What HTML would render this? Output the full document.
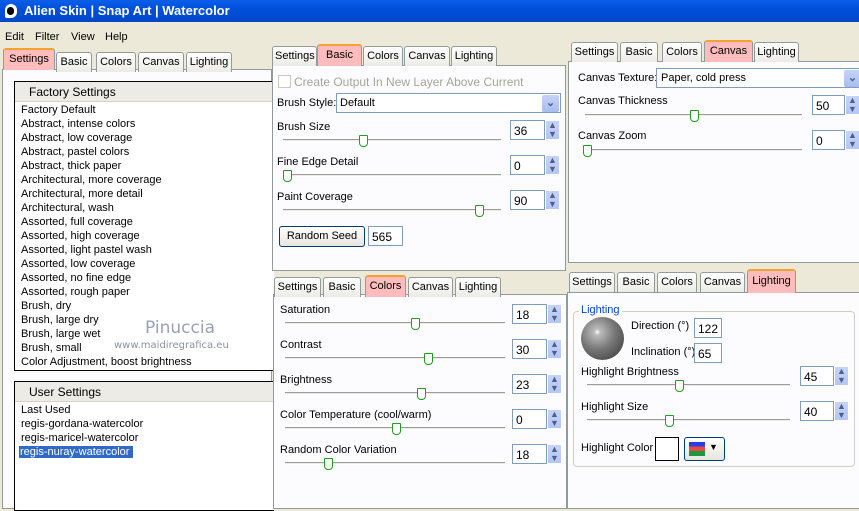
<!DOCTYPE html>
<html><head><meta charset="utf-8"><style>
*{margin:0;padding:0;box-sizing:border-box}
body{width:859px;height:492px;overflow:hidden;background:#ece9d8;font-family:"Liberation Sans",sans-serif;font-size:11px;color:#000;position:relative}
.a{position:absolute;white-space:nowrap}
.title{left:0;top:0;width:859px;height:22px;background:linear-gradient(#0a5fe8,#0050dc 40%,#0046c8);color:#fff;font-weight:bold;font-size:13px;padding:3px 0 0 24px}
.panel{background:#fcfcfe;border:1px solid #919b9c}
.tab{height:20px;border:1px solid #919b9c;border-bottom:none;border-radius:3px 3px 0 0;background:linear-gradient(#fff,#ecebe6);padding:3px 2px 0;font-size:11px;text-align:center;overflow:hidden}
.tab.sel{background:#ffbcbc;border-top:2px solid #f6a030}
.track{height:3px;border-top:1px solid #9d9c99;border-bottom:1px solid #fff;background:#ecebe5}
.thumb{width:9px;height:12px;background:#fff;border:1px solid #1ca01c;border-radius:1px 1px 4px 4px}
.spin{height:20px;border:1px solid #7f9db9;background:#fff;padding:3px 0 0 3px;font-size:12px}
.arr{width:15px;height:20px;background:linear-gradient(#c6d3f7,#b4c6f4);border:1px solid #fff;color:#4d6185;font-size:9px;line-height:9px;text-align:center}
.box{border:1px solid #7f9db9;background:#fff}
.drop{width:17px;height:17px;background:linear-gradient(#c6d3f7,#a8bdf0);border-radius:2px;color:#4d6185;text-align:center;font-size:11px;font-weight:bold;line-height:17px}
.hdr{background:#ecebe5;border-bottom:1px solid #d6d2c2;padding:3px 0 0 14px;font-size:12px;height:20px}
.lst div{height:14px;line-height:14px}
.lbl{font-size:11px}
</style></head><body>
<div class="a title">Alien Skin | Snap Art | Watercolor</div>
<div class="a" style="left:5px;top:4px;width:12px;height:14px;background:#fff;border-radius:6px 6px 6px 2px"></div>
<div class="a" style="left:7px;top:7px;width:7px;height:8px;background:#000;border-radius:4px"></div>
<div class="a" style="left:5px;top:31px">Edit</div><div class="a" style="left:35px;top:31px">Filter</div><div class="a" style="left:71px;top:31px">View</div><div class="a" style="left:105px;top:31px">Help</div>

<!-- left panel -->
<div class="a panel" style="left:2px;top:69px;width:270px;height:440px"></div>
<div class="a tab sel" style="left:3px;top:48px;width:52px;height:22px">Settings</div>
<div class="a tab" style="left:56px;top:52px;width:36px">Basic</div>
<div class="a tab" style="left:96px;top:52px;width:40px">Colors</div>
<div class="a tab" style="left:138px;top:52px;width:46px">Canvas</div>
<div class="a tab" style="left:186px;top:52px;width:46px">Lighting</div>
<div class="a" style="left:14px;top:81px;width:260px;height:290px;border:1px solid #000;border-right:none;background:#fff">
<div class="hdr">Factory Settings</div>
<div class="lst" style="padding:1px 0 0 6px">
<div>Factory Default</div><div>Abstract, intense colors</div><div>Abstract, low coverage</div><div>Abstract, pastel colors</div><div>Abstract, thick paper</div><div>Architectural, more coverage</div><div>Architectural, more detail</div><div>Architectural, wash</div><div>Assorted, full coverage</div><div>Assorted, high coverage</div><div>Assorted, light pastel wash</div><div>Assorted, low coverage</div><div>Assorted, no fine edge</div><div>Assorted, rough paper</div><div>Brush, dry</div><div>Brush, large dry</div><div>Brush, large wet</div><div>Brush, small</div><div>Color Adjustment, boost brightness</div></div></div>
<div class="a" style="left:14px;top:381px;width:260px;height:130px;border:1px solid #000;border-right:none;background:#fff">
<div class="hdr">User Settings</div>
<div class="lst" style="padding:1px 0 0 6px"><div>Last Used</div><div>regis-gordana-watercolor</div><div>regis-maricel-watercolor</div><div><span style="background:#316ac5;color:#fff;padding:0 4px 0 1px;margin-left:-2px">regis-nuray-watercolor</span></div></div></div>
<div class="a" style="left:145px;top:318px;color:#9aa0b8;font-size:17px;font-family:'DejaVu Sans',sans-serif">Pinuccia</div>
<div class="a" style="left:114px;top:340px;color:#8a90a8;font-size:10px;font-family:'DejaVu Sans',sans-serif">www.maidiregrafica.eu</div>

<!-- middle top: Basic -->
<div class="a panel" style="left:272px;top:65px;width:294px;height:206px"></div>
<div class="a tab" style="left:272px;top:46px;width:45px">Settings</div>
<div class="a tab sel" style="left:317px;top:44px;width:45px;height:22px">Basic</div>
<div class="a tab" style="left:363px;top:46px;width:40px">Colors</div>
<div class="a tab" style="left:404px;top:46px;width:46px">Canvas</div>
<div class="a tab" style="left:451px;top:46px;width:46px">Lighting</div>
<div class="a" style="left:278px;top:75px;width:13px;height:13px;border:1px solid #cac8bb;background:#fff"></div>
<div class="a" style="left:294px;top:75px;color:#a5a597;font-size:12px">Create Output In New Layer Above Current</div>
<div class="a lbl" style="left:277px;top:97px">Brush Style:</div>
<div class="a box" style="left:336px;top:93px;width:225px;height:20px;padding:3px 0 0 3px">Default</div>
<div class="a drop" style="left:542px;top:95px">&#8964;</div>
<div class="a lbl" style="left:277px;top:121px">Brush Size</div>
<div class="a track" style="left:283px;top:139px;width:218px"></div><div class="a thumb" style="left:359px;top:135px"></div>
<div class="a spin" style="left:510px;top:120px;width:35px">36</div><div class="a arr" style="left:545px;top:120px">▲<br>▼</div>
<div class="a lbl" style="left:277px;top:156px">Fine Edge Detail</div>
<div class="a track" style="left:283px;top:174px;width:218px"></div><div class="a thumb" style="left:283px;top:170px"></div>
<div class="a spin" style="left:510px;top:155px;width:35px">0</div><div class="a arr" style="left:545px;top:155px">▲<br>▼</div>
<div class="a lbl" style="left:277px;top:191px">Paint Coverage</div>
<div class="a track" style="left:283px;top:209px;width:218px"></div><div class="a thumb" style="left:475px;top:205px"></div>
<div class="a spin" style="left:510px;top:190px;width:35px">90</div><div class="a arr" style="left:545px;top:190px">▲<br>▼</div>
<div class="a" style="left:279px;top:226px;width:86px;height:21px;border:1px solid #003c74;border-radius:3px;background:linear-gradient(#fff,#e6e5de);text-align:center;padding-top:3px;font-size:11px">Random Seed</div>
<div class="a spin" style="left:368px;top:226px;width:35px">565</div>

<!-- middle bottom: Colors -->
<div class="a panel" style="left:273px;top:294px;width:294px;height:215px"></div>
<div class="a tab" style="left:274px;top:277px;width:47px">Settings</div>
<div class="a tab" style="left:323px;top:277px;width:38px">Basic</div>
<div class="a tab sel" style="left:365px;top:275px;width:41px;height:22px">Colors</div>
<div class="a tab" style="left:408px;top:277px;width:45px">Canvas</div>
<div class="a tab" style="left:455px;top:277px;width:46px">Lighting</div>
<div class="a lbl" style="left:280px;top:304px">Saturation</div>
<div class="a track" style="left:285px;top:322px;width:220px"></div><div class="a thumb" style="left:411px;top:318px"></div>
<div class="a spin" style="left:512px;top:304px;width:35px">18</div><div class="a arr" style="left:547px;top:304px">▲<br>▼</div>
<div class="a lbl" style="left:280px;top:339px">Contrast</div>
<div class="a track" style="left:285px;top:357px;width:220px"></div><div class="a thumb" style="left:424px;top:353px"></div>
<div class="a spin" style="left:512px;top:339px;width:35px">30</div><div class="a arr" style="left:547px;top:339px">▲<br>▼</div>
<div class="a lbl" style="left:280px;top:374px">Brightness</div>
<div class="a track" style="left:285px;top:392px;width:220px"></div><div class="a thumb" style="left:417px;top:388px"></div>
<div class="a spin" style="left:512px;top:374px;width:35px">23</div><div class="a arr" style="left:547px;top:374px">▲<br>▼</div>
<div class="a lbl" style="left:280px;top:409px">Color Temperature (cool/warm)</div>
<div class="a track" style="left:285px;top:427px;width:220px"></div><div class="a thumb" style="left:392px;top:423px"></div>
<div class="a spin" style="left:512px;top:409px;width:35px">0</div><div class="a arr" style="left:547px;top:409px">▲<br>▼</div>
<div class="a lbl" style="left:280px;top:444px">Random Color Variation</div>
<div class="a track" style="left:285px;top:462px;width:220px"></div><div class="a thumb" style="left:324px;top:458px"></div>
<div class="a spin" style="left:512px;top:444px;width:35px">18</div><div class="a arr" style="left:547px;top:444px">▲<br>▼</div>

<!-- right top: Canvas -->
<div class="a panel" style="left:568px;top:61px;width:295px;height:202px"></div>
<div class="a tab" style="left:571px;top:42px;width:47px">Settings</div>
<div class="a tab" style="left:620px;top:42px;width:38px">Basic</div>
<div class="a tab" style="left:662px;top:42px;width:40px">Colors</div>
<div class="a tab sel" style="left:704px;top:40px;width:49px;height:22px">Canvas</div>
<div class="a tab" style="left:754px;top:42px;width:45px">Lighting</div>
<div class="a lbl" style="left:578px;top:72px">Canvas Texture:</div>
<div class="a box" style="left:656px;top:68px;width:205px;height:20px;padding:3px 0 0 4px">Paper, cold press</div>
<div class="a drop" style="left:844px;top:70px">&#8964;</div>
<div class="a lbl" style="left:578px;top:95px">Canvas Thickness</div>
<div class="a track" style="left:585px;top:114px;width:217px"></div><div class="a thumb" style="left:690px;top:110px"></div>
<div class="a spin" style="left:812px;top:95px;width:33px">50</div><div class="a arr" style="left:845px;top:95px">▲<br>▼</div>
<div class="a lbl" style="left:578px;top:130px">Canvas Zoom</div>
<div class="a track" style="left:585px;top:149px;width:217px"></div><div class="a thumb" style="left:583px;top:145px"></div>
<div class="a spin" style="left:812px;top:130px;width:33px">0</div><div class="a arr" style="left:845px;top:130px">▲<br>▼</div>

<!-- right bottom: Lighting -->
<div class="a panel" style="left:567px;top:292px;width:296px;height:217px"></div>
<div class="a tab" style="left:569px;top:272px;width:46px">Settings</div>
<div class="a tab" style="left:617px;top:272px;width:38px">Basic</div>
<div class="a tab" style="left:657px;top:272px;width:40px">Colors</div>
<div class="a tab" style="left:700px;top:272px;width:45px">Canvas</div>
<div class="a tab sel" style="left:747px;top:269px;width:49px;height:24px;padding-top:4px">Lighting</div>
<div class="a" style="left:573px;top:311px;width:282px;height:156px;border:1px solid #d0d0bf;border-radius:4px"></div>
<div class="a" style="left:579px;top:304px;background:#fcfcfe;color:#0046d5;padding:0 2px">Lighting</div>
<div class="a" style="left:581px;top:317px;width:43px;height:43px;border-radius:50%;background:radial-gradient(circle at 38% 35%,#fff 0,#bbb 8%,#777 45%,#333 100%)"></div>
<div class="a lbl" style="left:631px;top:320px">Direction (°)</div>
<div class="a spin" style="left:694px;top:318px;width:28px">122</div>
<div class="a lbl" style="left:631px;top:346px">Inclination (°)</div>
<div class="a spin" style="left:694px;top:343px;width:28px">65</div>
<div class="a lbl" style="left:581px;top:366px">Highlight Brightness</div>
<div class="a track" style="left:587px;top:384px;width:203px"></div><div class="a thumb" style="left:675px;top:380px"></div>
<div class="a spin" style="left:800px;top:366px;width:34px">45</div><div class="a arr" style="left:834px;top:366px">▲<br>▼</div>
<div class="a lbl" style="left:581px;top:401px">Highlight Size</div>
<div class="a track" style="left:587px;top:419px;width:203px"></div><div class="a thumb" style="left:665px;top:415px"></div>
<div class="a spin" style="left:800px;top:401px;width:34px">40</div><div class="a arr" style="left:834px;top:401px">▲<br>▼</div>
<div class="a lbl" style="left:581px;top:442px">Highlight Color</div>
<div class="a" style="left:655px;top:437px;width:24px;height:24px;border:1px solid #000;background:#fff"></div>
<div class="a" style="left:684px;top:437px;width:41px;height:24px;border:1px solid #003c74;border-radius:3px;background:linear-gradient(#fff,#e6e5de)"></div>
<div class="a" style="left:689px;top:442px;width:16px;height:14px;background:linear-gradient(#2b3de0 0 33%,#e84848 33% 66%,#1a9a3a 66%)"></div>
<div class="a" style="left:709px;top:442px;font-size:9px">▼</div>
</body></html>
